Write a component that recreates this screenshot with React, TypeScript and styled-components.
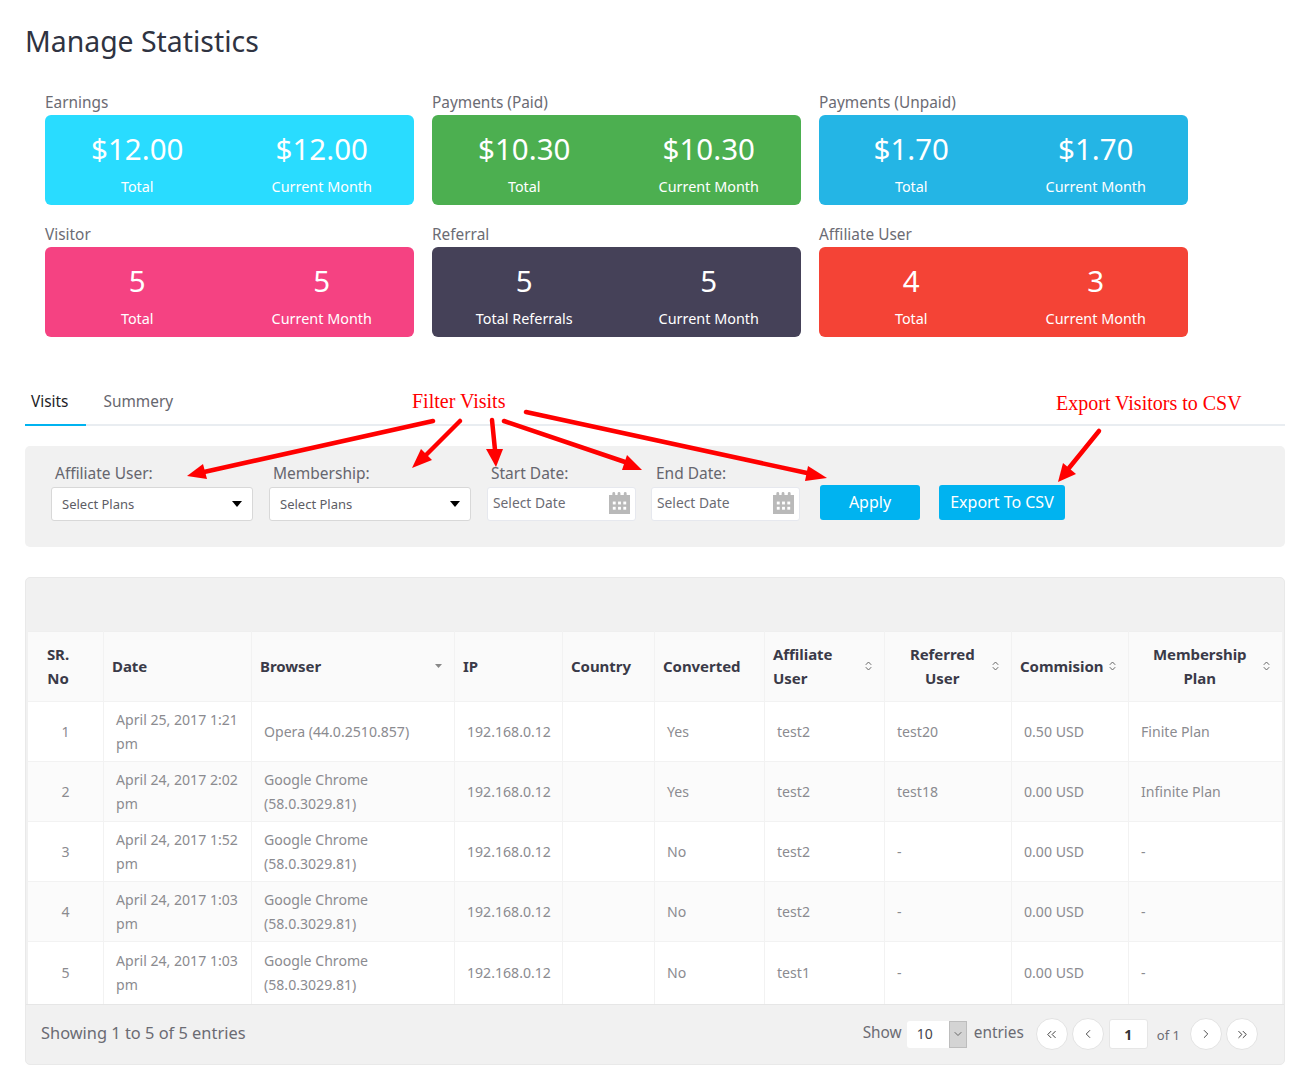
import { ReactElement } from 'react';
import styled, { createGlobalStyle } from 'styled-components';
import { ChevronDown, ChevronLeft, ChevronRight, ChevronsLeft, ChevronsRight } from 'lucide-react';

const GlobalStyle = createGlobalStyle`
  html, body {
    margin: 0;
    padding: 0;
    background: #fff;
    font-family: "Noto Sans", "Open Sans", sans-serif;
  }
  * { box-sizing: border-box; }
`;

const Page = styled.div`
  position: relative;
  width: 1309px;
  height: 1085px;
  padding: 0 24px 0 25px;
  overflow: hidden;
`;

const Title = styled.h1`
  margin: 0;
  padding-top: 21px;
  height: 92px;
  font-size: 28.4px;
  line-height: 40px;
  font-weight: 400;
  color: #2f3341;
`;

const StatGrid = styled.div`
  display: grid;
  grid-template-columns: repeat(3, 369px);
  column-gap: 18px;
  row-gap: 19px;
  padding-left: 20px;
`;

const StatLabel = styled.div`
  padding-bottom: 1px;
  font-size: 15.4px;
  line-height: 22px;
  color: #6b6b73;
`;

const StatCard = styled.div<{ $bg: string }>`
  display: grid;
  grid-template-columns: 1fr 1fr;
  height: 90px;
  border-radius: 6px;
  background: ${(p) => p.$bg};
  color: #fff;
`;

const StatCell = styled.div`
  display: flex;
  flex-direction: column;
  align-items: center;
  padding-top: 13px;
`;

const StatValue = styled.div`
  font-size: 29.5px;
  line-height: 42px;
`;

const StatCaption = styled.div`
  margin-top: 7px;
  font-size: 14.4px;
  line-height: 20px;
`;

const Tabs = styled.div`
  display: flex;
  height: 48px;
  margin-top: 41px;
  border-bottom: 2px solid #e9edf1;
`;

const Tab = styled.div<{ $active?: boolean }>`
  height: 48px;
  padding: ${(p) => (p.$active ? '0 18px 0 6px' : '0 17px')};
  line-height: 47px;
  font-size: 15.4px;
  color: ${(p) => (p.$active ? '#1d1d26' : '#66666e')};
  border-bottom: ${(p) => (p.$active ? '2px solid #00b3f0' : 'none')};
`;

const FilterPanel = styled.div`
  display: flex;
  height: 101px;
  margin-top: 20px;
  padding: 16px 0 0 26px;
  border-radius: 5px;
  background: #f1f1f1;
`;

const Field = styled.div<{ $width: number; $gap: number; $inset: number }>`
  width: ${(p) => p.$width}px;
  margin-right: ${(p) => p.$gap}px;
  label {
    display: block;
    padding: 0 0 2px ${(p) => p.$inset}px;
    font-size: 15.5px;
    line-height: 23px;
    color: #66666e;
  }
`;

const SelectBox = styled.div`
  display: flex;
  align-items: center;
  justify-content: space-between;
  height: 34px;
  padding: 0 10px;
  background: #fff;
  border: 1px solid #d8d8d8;
  border-radius: 3px;
  font-size: 13px;
  color: #5d5d65;
`;

const Caret = styled.span`
  width: 0;
  height: 0;
  border-left: 5.5px solid transparent;
  border-right: 5.5px solid transparent;
  border-top: 6px solid #000;
`;

const DateBox = styled.div`
  display: flex;
  align-items: center;
  justify-content: space-between;
  height: 34px;
  padding: 0 5px 3px 5px;
  background: #fff;
  border: 1px solid #e6e8ee;
  border-radius: 3px;
  font-size: 13.8px;
  color: #6b6b73;
`;

const ActionButton = styled.button<{ $width: number; $gap: number }>`
  width: ${(p) => p.$width}px;
  height: 35px;
  margin: 23px ${(p) => p.$gap}px 0 0;
  padding: 0 0 2px;
  border: 0;
  border-radius: 3px;
  background: #00b3f0;
  color: #fff;
  font-family: inherit;
  font-size: 16px;
`;

const TablePanel = styled.div`
  height: 488px;
  margin-top: 30px;
  border: 1px solid #e9e9e9;
  border-radius: 5px;
  background: #f1f1f1;
  overflow: hidden;
`;

const TableTop = styled.div`
  height: 53px;
`;

const VisitTable = styled.table`
  width: 1254px;
  margin-left: 2px;
  table-layout: fixed;
  border-collapse: collapse;
  background: #fff;
`;

const HeadCell = styled.th<{ $padRight: number }>`
  height: 70px;
  padding: 0 ${(p) => p.$padRight}px 2px 8.5px;
  background: #fafafa;
  border-right: 1px solid #f2f2f2;
  border-top: 1px solid #efefef;
  font-size: 15px;
  line-height: 24px;
  font-weight: 700;
  letter-spacing: -0.05px;
  color: #3a3a48;
  text-align: left;
`;

const HeadInner = styled.div<{ $center?: boolean }>`
  display: flex;
  align-items: center;
  justify-content: space-between;
  span {
    flex: 1;
    text-align: ${(p) => (p.$center ? 'center' : 'left')};
  }
`;

const Row = styled.tr<{ $odd: boolean; $height: number }>`
  height: ${(p) => p.$height}px;
  background: ${(p) => (p.$odd ? '#fff' : '#fbfbfb')};
  border-top: 1px solid #f2f2f2;
`;

const Cell = styled.td<{ $center?: boolean }>`
  padding: 0 12px 0 12.5px;
  border-right: 1px solid #f2f2f2;
  font-size: 14.1px;
  line-height: 24px;
  color: #8b8b90;
  text-align: ${(p) => (p.$center ? 'center' : 'left')};
`;

const Footer = styled.div`
  display: flex;
  align-items: center;
  justify-content: space-between;
  height: 60px;
  padding: 0 26px 3px 15px;
  border-top: 1px solid #e6e6e6;
  font-size: 16.4px;
  color: #6b6b73;
`;

const Pager = styled.div`
  display: flex;
  align-items: center;
  font-size: 15.4px;
`;

const SizeBox = styled.div`
  display: flex;
  justify-content: space-between;
  width: 60px;
  height: 27px;
  margin: 3px 7px 0 5px;
  padding-left: 10px;
  background: #fff;
  border-radius: 3px;
  font-size: 14px;
  line-height: 26px;
  color: #44444c;
`;

const SizeArrow = styled.span`
  display: flex;
  align-items: center;
  justify-content: center;
  width: 18px;
  height: 27px;
  background: #d4d4d4;
  border: 1px solid #bdbdbd;
  color: #666;
`;

const Entries = styled.span`
  margin-right: 12px;
`;

const RoundButton = styled.span<{ $gap: number }>`
  display: flex;
  align-items: center;
  justify-content: center;
  width: 32px;
  height: 32px;
  margin: 3px ${(p) => p.$gap}px 0 0;
  border-radius: 50%;
  background: #fff;
  border: 1px solid #e3e3e3;
  color: #333;
`;

const PageInput = styled.span`
  display: flex;
  align-items: center;
  justify-content: center;
  width: 39px;
  height: 30px;
  margin: 3px 0 0 5px;
  background: #fff;
  border: 1px solid #e6e6e6;
  border-radius: 3px;
  font-size: 14px;
  font-weight: 700;
  color: #333;
`;

const PageOf = styled.span`
  margin: 4px 10px 0 9px;
  font-size: 13px;
`;

const Overlay = styled.svg`
  position: absolute;
  left: 0;
  top: 0;
  pointer-events: none;
`;

const Note = styled.div<{ $left: number; $top: number }>`
  position: absolute;
  left: ${(p) => p.$left}px;
  top: ${(p) => p.$top}px;
  font-family: "Liberation Serif", serif;
  font-size: 20px;
  line-height: 24px;
  color: #f00;
  white-space: nowrap;
`;

const stats = [
  { label: 'Earnings', bg: '#29dcff', a: '$12.00', b: '$12.00', cap: 'Total' },
  { label: 'Payments (Paid)', bg: '#4caf50', a: '$10.30', b: '$10.30', cap: 'Total' },
  { label: 'Payments (Unpaid)', bg: '#24b5e5', a: '$1.70', b: '$1.70', cap: 'Total' },
  { label: 'Visitor', bg: '#f54282', a: '5', b: '5', cap: 'Total' },
  { label: 'Referral', bg: '#454158', a: '5', b: '5', cap: 'Total Referrals' },
  { label: 'Affiliate User', bg: '#f44336', a: '4', b: '3', cap: 'Total' },
];

const columns: { title: string[]; width: number; sort?: 'down' | 'both'; center?: boolean; padRight?: number }[] = [
  { title: ['SR.', 'No'], width: 75, center: true, padRight: 23 },
  { title: ['Date'], width: 148 },
  { title: ['Browser'], width: 203, sort: 'down' },
  { title: ['IP'], width: 108 },
  { title: ['Country'], width: 92 },
  { title: ['Converted'], width: 110 },
  { title: ['Affiliate', 'User'], width: 120, sort: 'both' },
  { title: ['Referred', 'User'], width: 127, sort: 'both', center: true },
  { title: ['Commision'], width: 117, sort: 'both' },
  { title: ['Membership', 'Plan'], width: 154, sort: 'both', center: true },
];

const chrome = ['Google Chrome', '(58.0.3029.81)'];

const rows = [
  { date: 'April 25, 2017 1:21', browser: ['Opera (44.0.2510.857)'], conv: 'Yes', aff: 'test2', ref: 'test20', com: '0.50 USD', plan: 'Finite Plan', h: 60 },
  { date: 'April 24, 2017 2:02', browser: chrome, conv: 'Yes', aff: 'test2', ref: 'test18', com: '0.00 USD', plan: 'Infinite Plan', h: 60 },
  { date: 'April 24, 2017 1:52', browser: chrome, conv: 'No', aff: 'test2', ref: '-', com: '0.00 USD', plan: '-', h: 60 },
  { date: 'April 24, 2017 1:03', browser: chrome, conv: 'No', aff: 'test2', ref: '-', com: '0.00 USD', plan: '-', h: 60 },
  { date: 'April 24, 2017 1:03', browser: chrome, conv: 'No', aff: 'test1', ref: '-', com: '0.00 USD', plan: '-', h: 62 },
];

// start of the shaft, then the three corners of the head (tip first)
const arrows = [
  { x: 433, y: 421, head: '187,476 203,464 207,479', ex: 204, ey: 472 },
  { x: 460, y: 421, head: '412,468 421,449 432,460', ex: 426, ey: 455 },
  { x: 492, y: 420, head: '496,467 486,449 503,449', ex: 495, ey: 450 },
  { x: 504, y: 421, head: '642,470 627,455 622,470', ex: 625, ey: 462 },
  { x: 526, y: 412, head: '827,478 808,466 805,481', ex: 807, ey: 473 },
  { x: 1099, y: 431, head: '1058,482 1063,463 1076,474', ex: 1069, ey: 468 },
];

const CalendarIcon = () => (
  <svg width="21" height="22" viewBox="0 0 22 23">
    <path
      fill="#b9b9b9"
      d="M0 3h3.5V1.5a1.5 1.5 0 0 1 3 0V3h2.5V1.5a1.5 1.5 0 0 1 3 0V3h3.5V1.5a1.5 1.5 0 0 1 3 0V3H22v20H0z"
    />
    <g fill="#fff">
      <rect x="4" y="10" width="3" height="3" />
      <rect x="9.5" y="10" width="3" height="3" />
      <rect x="15" y="10" width="3" height="3" />
      <rect x="4" y="15.5" width="3" height="3" />
      <rect x="9.5" y="15.5" width="3" height="3" />
      <rect x="15" y="15.5" width="3" height="3" />
    </g>
  </svg>
);

const SortIcon = ({ kind }: { kind: 'down' | 'both' }) =>
  kind === 'down' ? (
    <svg width="7" height="4" viewBox="0 0 7 4">
      <path d="M0 0h7L3.5 4z" fill="#888" />
    </svg>
  ) : (
    <svg width="7" height="10" viewBox="0 0 7 10" fill="none" stroke="#666" strokeWidth="1">
      <path d="M0.8 3.8 3.5 1l2.7 2.8M0.8 6.2 3.5 9l2.7-2.8" />
    </svg>
  );

const App = (): ReactElement => (
  <Page>
    <GlobalStyle />
    <Title>Manage Statistics</Title>

    <StatGrid>
      {stats.map((s) => (
        <div key={s.label}>
          <StatLabel>{s.label}</StatLabel>
          <StatCard $bg={s.bg}>
            <StatCell>
              <StatValue>{s.a}</StatValue>
              <StatCaption>{s.cap}</StatCaption>
            </StatCell>
            <StatCell>
              <StatValue>{s.b}</StatValue>
              <StatCaption>Current Month</StatCaption>
            </StatCell>
          </StatCard>
        </div>
      ))}
    </StatGrid>

    <Tabs>
      <Tab $active>Visits</Tab>
      <Tab>Summery</Tab>
    </Tabs>

    <FilterPanel>
      <Field $width={202} $gap={16} $inset={4}>
        <label>Affiliate User:</label>
        <SelectBox>
          Select Plans
          <Caret />
        </SelectBox>
      </Field>
      <Field $width={202} $gap={16} $inset={4}>
        <label>Membership:</label>
        <SelectBox>
          Select Plans
          <Caret />
        </SelectBox>
      </Field>
      <Field $width={149} $gap={15} $inset={4}>
        <label>Start Date:</label>
        <DateBox>
          Select Date
          <CalendarIcon />
        </DateBox>
      </Field>
      <Field $width={149} $gap={20} $inset={5}>
        <label>End Date:</label>
        <DateBox>
          Select Date
          <CalendarIcon />
        </DateBox>
      </Field>
      <ActionButton $width={100} $gap={19}>Apply</ActionButton>
      <ActionButton $width={126} $gap={0}>Export To CSV</ActionButton>
    </FilterPanel>

    <TablePanel>
      <TableTop />
      <VisitTable>
        <colgroup>
          {columns.map((c) => (
            <col key={c.title[0]} width={c.width} />
          ))}
        </colgroup>
        <thead>
          <tr>
            {columns.map((c) => (
              <HeadCell key={c.title[0]} $padRight={c.padRight ?? 12}>
                <HeadInner $center={c.center}>
                  <span>
                    {c.title.map((t) => (
                      <div key={t}>{t}</div>
                    ))}
                  </span>
                  {c.sort && <SortIcon kind={c.sort} />}
                </HeadInner>
              </HeadCell>
            ))}
          </tr>
        </thead>
        <tbody>
          {rows.map((r, i) => (
            <Row key={i} $odd={i % 2 === 0} $height={r.h}>
              <Cell $center>{i + 1}</Cell>
              <Cell>
                {r.date}
                <br />
                pm
              </Cell>
              <Cell>
                {r.browser.map((b) => (
                  <div key={b}>{b}</div>
                ))}
              </Cell>
              <Cell>192.168.0.12</Cell>
              <Cell />
              <Cell>{r.conv}</Cell>
              <Cell>{r.aff}</Cell>
              <Cell>{r.ref}</Cell>
              <Cell>{r.com}</Cell>
              <Cell>{r.plan}</Cell>
            </Row>
          ))}
        </tbody>
      </VisitTable>
      <Footer>
        <span>Showing 1 to 5 of 5 entries</span>
        <Pager>
          Show
          <SizeBox>
            10
            <SizeArrow>
              <ChevronDown size={12} />
            </SizeArrow>
          </SizeBox>
          <Entries>entries</Entries>
          <RoundButton $gap={4}>
            <ChevronsLeft size={15} strokeWidth={1.5} />
          </RoundButton>
          <RoundButton $gap={0}>
            <ChevronLeft size={14} strokeWidth={1.5} />
          </RoundButton>
          <PageInput>1</PageInput>
          <PageOf>of 1</PageOf>
          <RoundButton $gap={4}>
            <ChevronRight size={14} strokeWidth={1.5} />
          </RoundButton>
          <RoundButton $gap={0}>
            <ChevronsRight size={15} strokeWidth={1.5} />
          </RoundButton>
        </Pager>
      </Footer>
    </TablePanel>

    <Note $left={412} $top={389}>Filter Visits</Note>
    <Note $left={1056} $top={391}>Export Visitors to CSV</Note>
    <Overlay width="1309" height="1085">
      {arrows.map((a) => (
        <g key={a.head}>
          <line x1={a.x} y1={a.y} x2={a.ex} y2={a.ey} stroke="#f00" strokeWidth="4.5" strokeLinecap="round" />
          <polygon points={a.head} fill="#f00" />
        </g>
      ))}
    </Overlay>
  </Page>
);

export default App;
